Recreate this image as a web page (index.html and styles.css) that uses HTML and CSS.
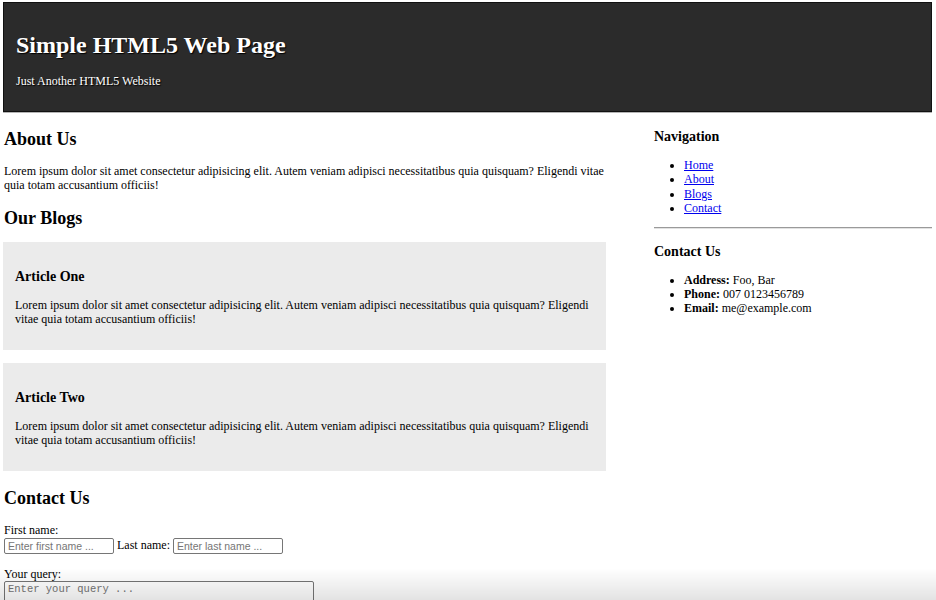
FILE: index.html
```html
<!DOCTYPE html>
<html lang="en">
<head>
<meta charset="utf-8">
<title>Simple HTML5 Web Page</title>
<link rel="stylesheet" href="styles.css">
</head>
<body>
<header class="site-header">
  <h1 class="site-title">Simple HTML5 Web Page</h1>
  <p class="site-tagline">Just Another HTML5 Website</p>
</header>
<div class="layout">
  <main class="main">
    <section class="section">
      <h2 class="section-title first-title">About Us</h2>
      <p class="text">Lorem ipsum dolor sit amet consectetur adipisicing elit. Autem veniam adipisci necessitatibus quia quisquam? Eligendi vitae quia totam accusantium officiis!</p>
    </section>
    <section class="section">
      <h2 class="section-title">Our Blogs</h2>
      <article class="article">
        <h3 class="article-title">Article One</h3>
        <p class="article-text">Lorem ipsum dolor sit amet consectetur adipisicing elit. Autem veniam adipisci necessitatibus quia quisquam? Eligendi vitae quia totam accusantium officiis!</p>
      </article>
      <article class="article">
        <h3 class="article-title">Article Two</h3>
        <p class="article-text">Lorem ipsum dolor sit amet consectetur adipisicing elit. Autem veniam adipisci necessitatibus quia quisquam? Eligendi vitae quia totam accusantium officiis!</p>
      </article>
    </section>
    <section class="section">
      <h2 class="section-title contact-title">Contact Us</h2>
      <form class="contact-form">
        <div class="form-line">
          <label class="label" for="fname">First name:</label><br>
          <input class="input" id="fname" type="text" placeholder="Enter first name ..."> <label class="label" for="lname">Last name:</label> <input class="input" id="lname" type="text" placeholder="Enter last name ...">
        </div>
        <div class="form-line query-line">
          <label class="label" for="query">Your query:</label><br>
          <textarea class="textarea" id="query" placeholder="Enter your query ..."></textarea>
        </div>
      </form>
    </section>
  </main>
  <aside class="sidebar">
    <h3 class="side-title">Navigation</h3>
    <ul class="side-list">
      <li><a class="link" href="#">Home</a></li>
      <li><a class="link" href="#">About</a></li>
      <li><a class="link" href="#">Blogs</a></li>
      <li><a class="link" href="#">Contact</a></li>
    </ul>
    <hr class="divider">
    <h3 class="side-title side-contact">Contact Us</h3>
    <ul class="side-list">
      <li><b>Address:</b> Foo, Bar</li>
      <li><b>Phone:</b> 007 0123456789</li>
      <li><b>Email:</b> me@example.com</li>
    </ul>
  </aside>
</div>
<div class="bottom-fade"></div>
</body>
</html>
```
FILE: styles.css
```css
html, body {
  background: #fff;
}
body {
  margin: 2px 4px 0 3px;
  font-family: "Liberation Serif", "Times New Roman", serif;
  font-size: 12px;
  line-height: 14.2px;
  color: #000;
}
.site-header {
  background: #2b2b2b;
  border: 1px solid #111;
  box-shadow: 0 0 0 1px #b5b5b5;
  padding: 28px 12px 23px;
  color: #fff;
  text-shadow: 1px 1px 1px #000;
}
.site-title {
  margin: 0 0 14px;
  font-size: 24px;
  line-height: 29px;
  font-weight: bold;
}
.site-tagline {
  margin: 0;
}
.layout {
  display: grid;
  grid-template-columns: 603px 1fr;
  column-gap: 48px;
}
.main {
  padding-left: 1px;
}
.section-title {
  font-size: 18px;
  line-height: 22px;
  margin: 14px 0 14px;
}
.first-title {
  margin-top: 16px;
}
.text {
  margin: 0;
}
.article {
  background: #ebebeb;
  padding: 12px 12px 13px;
  margin: -1px 0 14px -1px;
}
.article:last-child {
  margin-bottom: 0;
}
.article-title {
  font-size: 14px;
  line-height: 17px;
  margin: 14px 0 13px;
}
.article-text {
  margin: 0 0 11px;
}
.contact-title {
  margin-top: 16px;
}
.contact-form {
  margin: 0;
}
.form-line {
  line-height: 14.2px;
}
.query-line {
  margin-top: 13px;
}
.input {
  width: 110px;
  height: 16px;
  box-sizing: border-box;
  margin: 0;
  padding: 1px 3px;
  border: 1px solid #767676;
  border-radius: 2px;
  font-family: "Liberation Sans", Arial, sans-serif;
  font-size: 10.5px;
  vertical-align: middle;
}
.input::placeholder {
  color: #757575;
}
.textarea {
  display: block;
  width: 310px;
  height: 32px;
  box-sizing: border-box;
  margin: 0;
  padding: 1px 3px;
  border: 1px solid #767676;
  border-radius: 2px;
  font-family: "Liberation Mono", "Courier New", monospace;
  font-size: 10.5px;
  line-height: 12px;
  resize: none;
}
.textarea::placeholder {
  color: #757575;
}
.sidebar {
  padding-top: 16px;
}
.side-title {
  font-size: 14px;
  line-height: 17px;
  margin: 0 0 13px;
}
.side-contact {
  margin-top: 14px;
}
.side-list {
  margin: 0;
  padding-left: 30px;
}
.link {
  color: #0000ee;
  text-decoration: underline;
}
.divider {
  margin: 12px 0 0;
  border: 0;
  border-top: 1px solid #9a9a9a;
  border-bottom: 1px solid #e2e2e2;
  height: 0;
}
.bottom-fade {
  position: fixed;
  left: 0;
  right: 0;
  bottom: 0;
  height: 32px;
  background: linear-gradient(to bottom, rgba(0,0,0,0), rgba(0,0,0,0.11));
  pointer-events: none;
}
```
